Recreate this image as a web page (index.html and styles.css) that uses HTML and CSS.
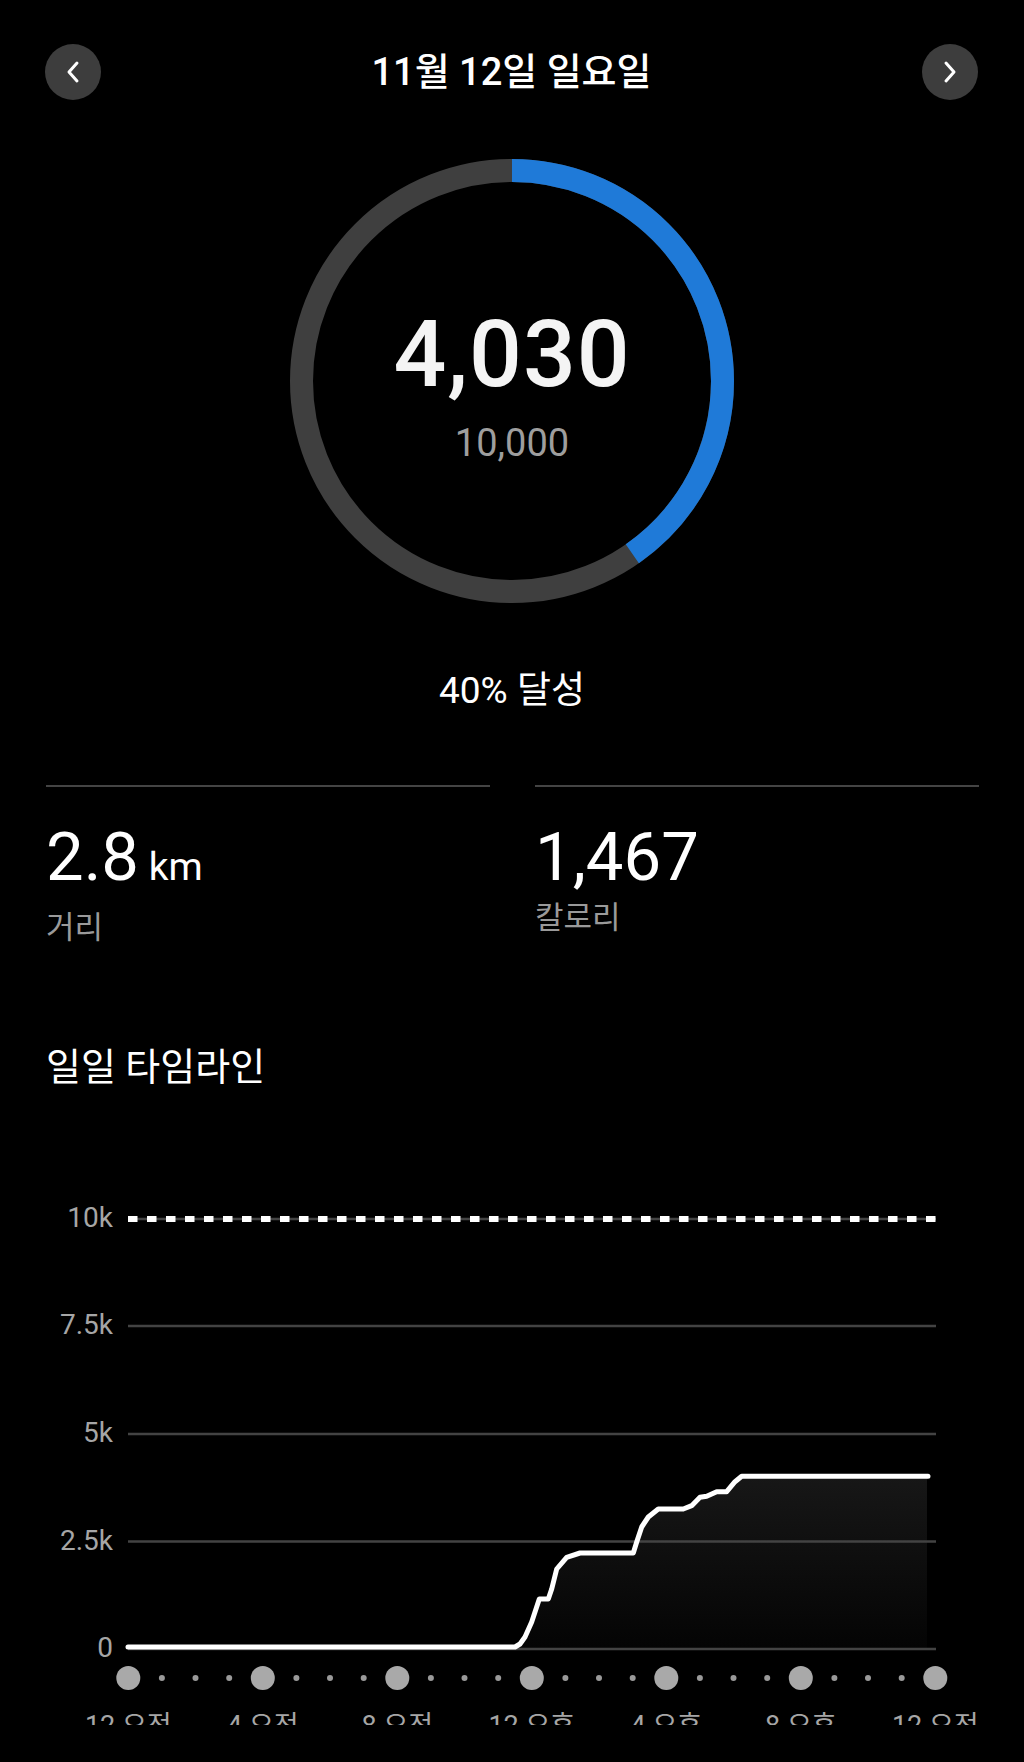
FILE: index.html
```
<!DOCTYPE html>
<html lang="ko">
<head>
<meta charset="utf-8">
<title>걸음 수</title>
<link rel="stylesheet" href="styles.css">
</head>
<body>
<div class="screen">
  <header class="topbar">
    <button class="nav-btn" aria-label="이전 날">
      <svg viewBox="0 0 24 24" width="24" height="24"><path d="M16 3 L8 12 L16 21" fill="none" stroke="#fff" stroke-width="3" stroke-linecap="round" stroke-linejoin="round"/></svg>
    </button>
    <h1 class="date">11월 12일 일요일</h1>
    <button class="nav-btn" aria-label="다음 날">
      <svg viewBox="0 0 24 24" width="24" height="24"><path d="M8 3 L16 12 L8 21" fill="none" stroke="#fff" stroke-width="3" stroke-linecap="round" stroke-linejoin="round"/></svg>
    </button>
  </header>

  <section class="ring">
    <svg class="ring-svg" viewBox="0 0 444 444" width="444" height="444">
      <circle cx="222" cy="222" r="210.5" fill="none" stroke="#3f3f3f" stroke-width="23"/>
      <circle cx="222" cy="222" r="210.5" fill="none" stroke="#1f7ad8" stroke-width="23" stroke-dasharray="533 1400" transform="rotate(-90 222 222)"/>
    </svg>
    <div class="ring-text">
      <div class="steps">4,030</div>
      <div class="goal">10,000</div>
    </div>
  </section>

  <p class="achieve">40% 달성</p>

  <section class="stats">
    <div class="stat">
      <div class="stat-value">2.8<span class="unit"> km</span></div>
      <div class="stat-label">거리</div>
    </div>
    <div class="stat">
      <div class="stat-value">1,467</div>
      <div class="stat-label">칼로리</div>
    </div>
  </section>

  <h2 class="section-title">일일 타임라인</h2>

  <div class="chart">
    <svg viewBox="0 0 1024 536" width="1024" height="536">
      <defs>
        <linearGradient id="area" x1="0" y1="0" x2="0" y2="1">
          <stop offset="0" stop-color="#171717"/>
          <stop offset="1" stop-color="#040404"/>
        </linearGradient>
      </defs>
      <polygon fill="url(#area)" points="515,458 520,455 525,448 531.7,433 539.3,410 548.3,410 551.7,400 556.7,380 566.7,368.3 580,364 633.3,364 636.7,353 641.7,338 648.3,328 658.3,320 683.3,320 691.7,316.7 700,308.3 706.7,307.3 716.7,302.7 726.7,302.7 735,292.7 741.7,287.3 927,287.3 927,460 515,460"/>
      <g class="grid">
        <line x1="128" y1="30" x2="936" y2="30"/>
        <line x1="128" y1="137" x2="936" y2="137"/>
        <line x1="128" y1="245" x2="936" y2="245"/>
        <line x1="128" y1="352.5" x2="936" y2="352.5"/>
        <line x1="128" y1="460" x2="936" y2="460"/>
      </g>
      <line class="goal-line" x1="128" y1="30" x2="936" y2="30"/>
      <g class="ylabels">
        <text x="113" y="38">10k</text>
        <text x="113" y="145">7.5k</text>
        <text x="113" y="253">5k</text>
        <text x="113" y="360.5">2.5k</text>
        <text x="113" y="468">0</text>
      </g>
      <polyline class="curve" points="128,458 515,458 520,455 525,448 531.7,433 539.3,410 548.3,410 551.7,400 556.7,380 566.7,368.3 580,364 633.3,364 636.7,353 641.7,338 648.3,328 658.3,320 683.3,320 691.7,316.7 700,308.3 706.7,307.3 716.7,302.7 726.7,302.7 735,292.7 741.7,287.3 928,287.3"/>
      <g class="dots-big">
        <circle cx="128.3" cy="489" r="12"/>
        <circle cx="262.8" cy="489" r="12"/>
        <circle cx="397.3" cy="489" r="12"/>
        <circle cx="531.8" cy="489" r="12"/>
        <circle cx="666.3" cy="489" r="12"/>
        <circle cx="800.8" cy="489" r="12"/>
        <circle cx="935.3" cy="489" r="12"/>
      </g>
      <g class="dots-small">
        <circle cx="161.9" cy="489" r="3"/><circle cx="195.5" cy="489" r="3"/><circle cx="229.2" cy="489" r="3"/>
        <circle cx="296.4" cy="489" r="3"/><circle cx="330" cy="489" r="3"/><circle cx="363.7" cy="489" r="3"/>
        <circle cx="430.9" cy="489" r="3"/><circle cx="464.5" cy="489" r="3"/><circle cx="498.2" cy="489" r="3"/>
        <circle cx="565.4" cy="489" r="3"/><circle cx="599" cy="489" r="3"/><circle cx="632.7" cy="489" r="3"/>
        <circle cx="699.9" cy="489" r="3"/><circle cx="733.5" cy="489" r="3"/><circle cx="767.2" cy="489" r="3"/>
        <circle cx="834.4" cy="489" r="3"/><circle cx="868" cy="489" r="3"/><circle cx="901.7" cy="489" r="3"/>
      </g>
      <g class="xlabels">
        <text x="128.3" y="546">12 오전</text>
        <text x="262.8" y="546">4 오전</text>
        <text x="397.3" y="546">8 오전</text>
        <text x="531.8" y="546">12 오후</text>
        <text x="666.3" y="546">4 오후</text>
        <text x="800.8" y="546">8 오후</text>
        <text x="935.3" y="546">12 오전</text>
      </g>
    </svg>
  </div>
</div>
</body>
</html>
```
FILE: styles.css
```
* { box-sizing: border-box; }

html, body {
  margin: 0;
  padding: 0;
  background: #000;
}

body {
  color: #fff;
  font-family: Roboto, "Noto Sans CJK KR", sans-serif;
}

.screen {
  width: 1024px;
  height: 1762px;
  overflow: hidden;
  background: #000;
}

/* header */
.topbar {
  display: flex;
  align-items: center;
  justify-content: space-between;
  padding: 44px 46px 0 45px;
}

.nav-btn {
  width: 56px;
  height: 56px;
  border: 0;
  padding: 0;
  border-radius: 50%;
  background: #3d3d3d;
  display: flex;
  align-items: center;
  justify-content: center;
}

.nav-btn svg { display: block; }

.date {
  margin: 0;
  font-size: 38px;
  line-height: 56px;
  font-weight: 500;
  color: #fff;
}

/* ring */
.ring {
  margin: 59px auto 0;
  width: 444px;
  height: 444px;
  display: grid;
}

.ring-svg,
.ring-text {
  grid-area: 1 / 1;
}

.ring-svg { display: block; }

.ring-text {
  display: flex;
  flex-direction: column;
  align-items: center;
  padding-top: 151px;
}

.steps {
  font-size: 93px;
  line-height: 90px;
  font-weight: 500;
  color: #f4f4f4;
  letter-spacing: 1px;
}

.goal {
  margin-top: 24px;
  font-size: 38px;
  line-height: 38px;
  color: #9e9e9e;
}

/* achievement */
.achieve {
  margin: 68px 0 0;
  text-align: center;
  font-size: 37px;
  line-height: 40px;
  color: #fff;
}

/* stats */
.stats {
  display: grid;
  grid-template-columns: 1fr 1fr;
  column-gap: 45px;
  padding: 0 45px 0 46px;
  margin-top: 74px;
}

.stat {
  border-top: 2px solid #444;
  padding-top: 37px;
}

.stat-value {
  font-size: 67px;
  line-height: 66px;
  color: #fff;
}

.unit {
  font-size: 39px;
}

.stat-label {
  margin-top: 10px;
  font-size: 31px;
  line-height: 36px;
  color: #9a9a9a;
}

/* timeline */
.section-title {
  margin: 100px 0 0 46px;
  font-size: 38px;
  line-height: 42px;
  font-weight: 400;
  color: #fff;
}

.chart {
  margin-top: 101px;
  height: 536px;
}

.chart svg {
  display: block;
  overflow: hidden;
}

.grid line {
  stroke: #434343;
  stroke-width: 2.5;
}

.goal-line {
  stroke: #fff;
  stroke-width: 6;
  stroke-dasharray: 9.5 9.5;
}

.ylabels text {
  font-family: Roboto, sans-serif;
  font-size: 28px;
  fill: #a6a6a6;
  text-anchor: end;
}

.curve {
  fill: none;
  stroke: #fff;
  stroke-width: 5;
  stroke-linejoin: round;
  stroke-linecap: round;
}

.dots-big circle { fill: #a9a9a9; }
.dots-small circle { fill: #9a9a9a; }

.xlabels text {
  font-family: Roboto, "Noto Sans CJK KR", sans-serif;
  font-size: 27px;
  fill: #a6a6a6;
  text-anchor: middle;
}
```
